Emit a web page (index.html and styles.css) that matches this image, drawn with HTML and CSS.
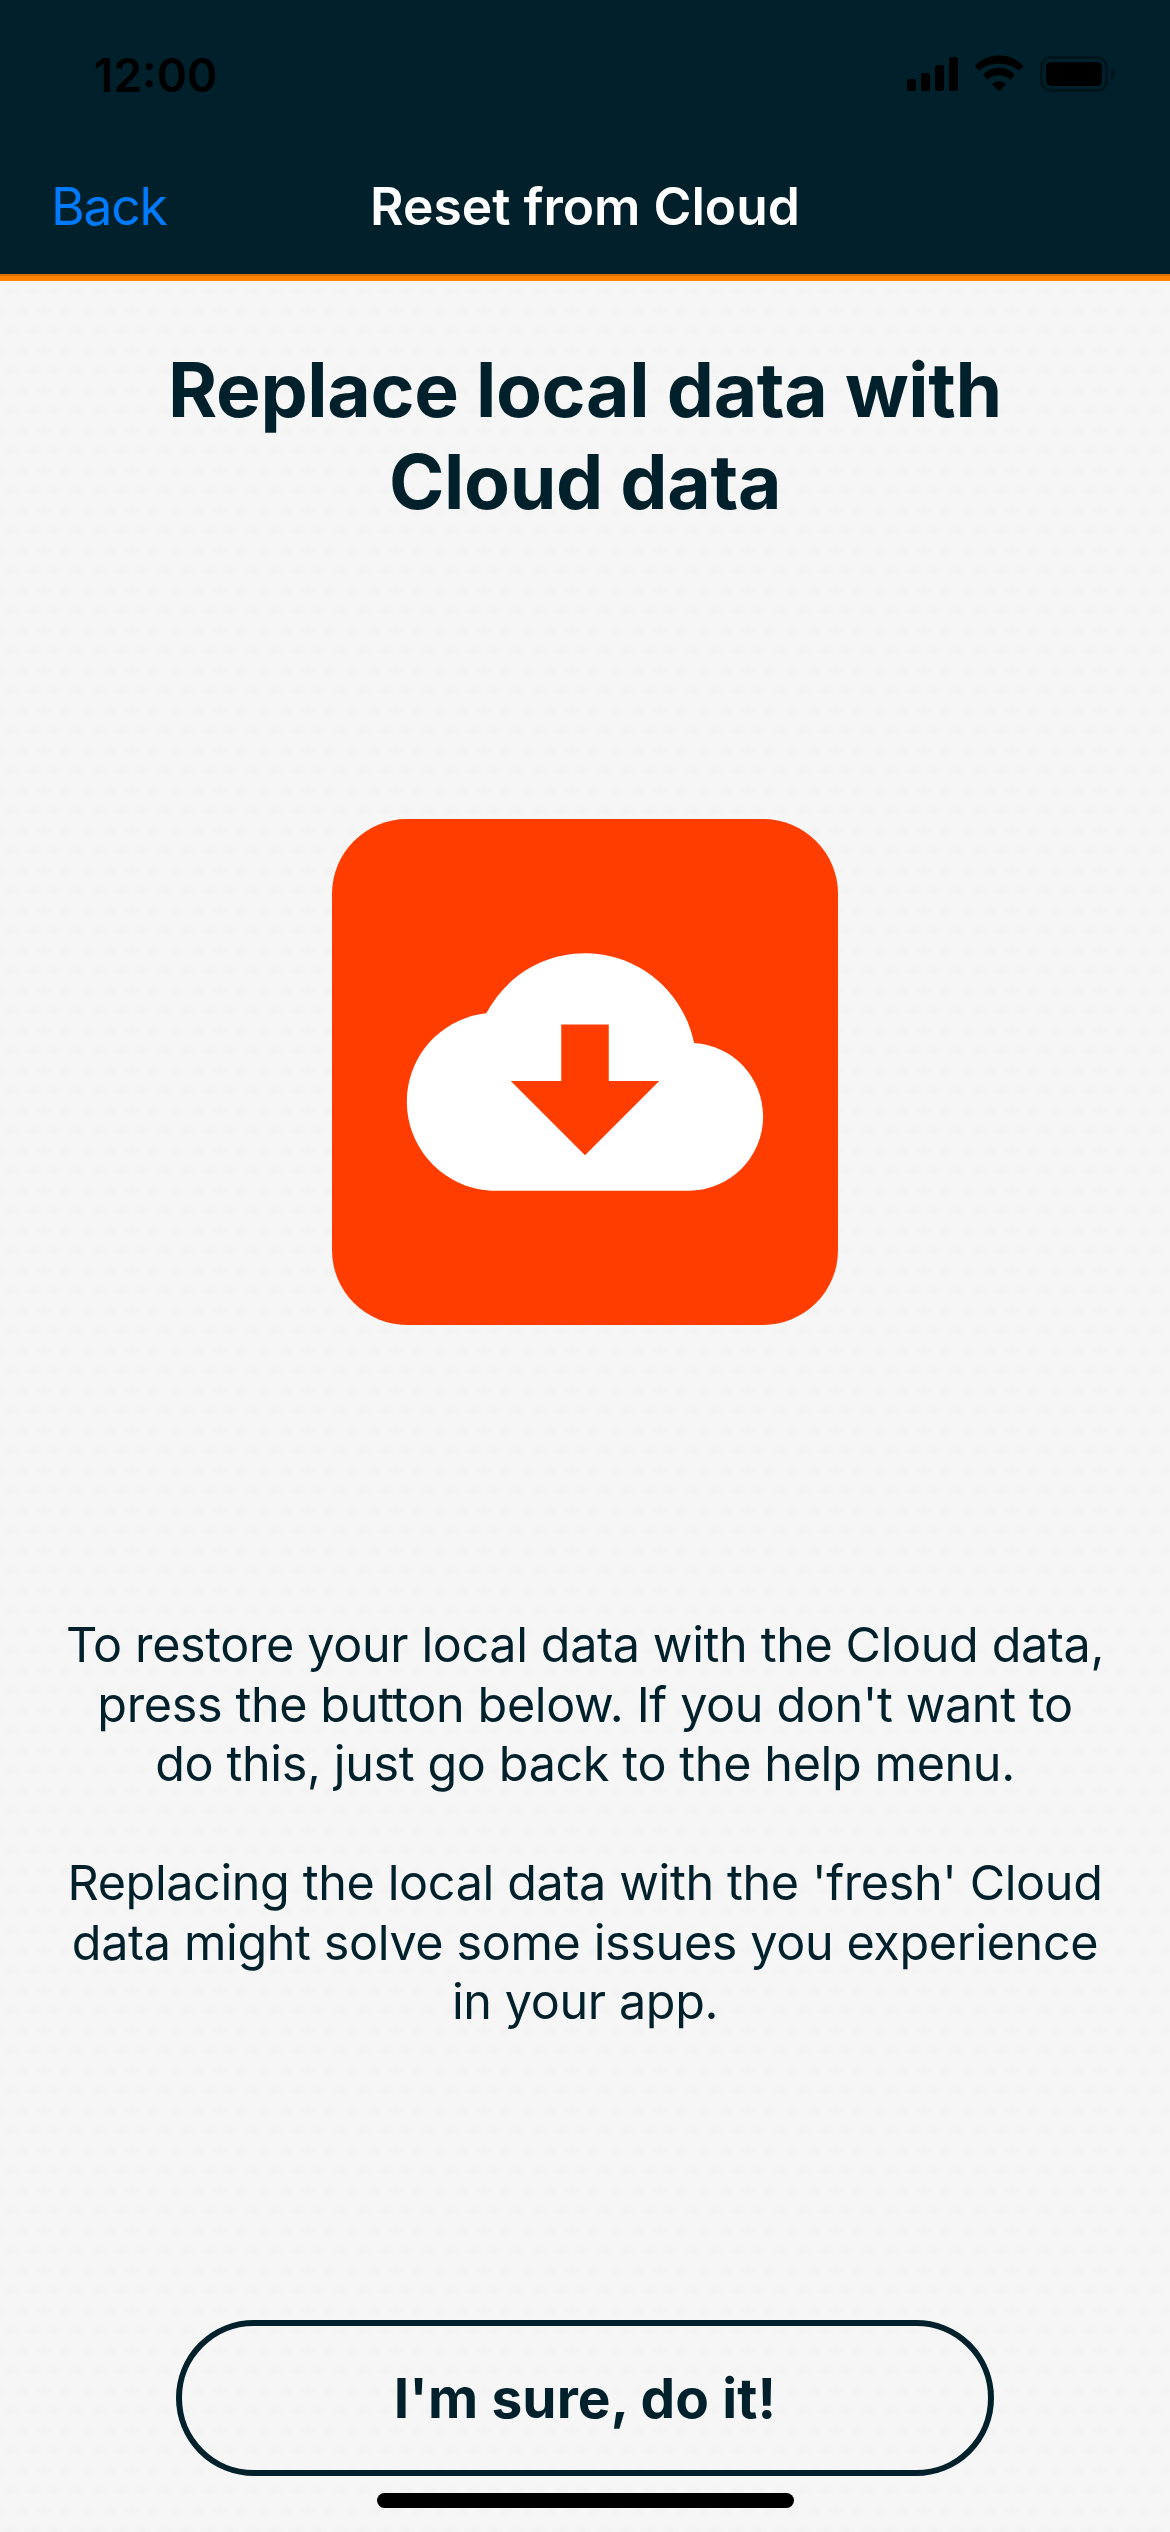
FILE: index.html
```html
<!DOCTYPE html>
<html lang="en">
<head>
<meta charset="utf-8">
<title>Reset from Cloud</title>
<link rel="stylesheet" href="styles.css">
</head>
<body>
<div class="screen">
  <header class="header">
    <div class="status">
      <span class="time">12:00</span>
      <svg class="status-icons" viewBox="0 0 208 38" aria-hidden="true">
        <rect x="0" y="25" width="9" height="12" rx="2.5"/>
        <rect x="14" y="19" width="9" height="18" rx="2.5"/>
        <rect x="28" y="11" width="9" height="26" rx="2.5"/>
        <rect x="42" y="3" width="9" height="34" rx="2.5"/>
        <path d="M67.7 12A33 33 0 0 1 116.3 12L112 16.7A31 31 0 0 0 72 16.7Z"/>
        <path d="M76.2 20.7A21.5 21.5 0 0 1 107.8 20.7L103.5 25.8A17 17 0 0 0 80.5 25.8Z"/>
        <path d="M85 30.2A10 10 0 0 1 99 30.2L92 37.3Z"/>
        <rect class="battery-shell" x="134.5" y="3.5" width="65" height="33" rx="9.5"/>
        <rect x="139" y="8" width="56" height="24" rx="5"/>
        <path class="battery-cap" d="M204 14.2Q208 16 208 20T204 25.8Z"/>
      </svg>
    </div>
    <nav class="nav">
      <a class="back">Back</a>
      <span class="title">Reset from Cloud</span>
    </nav>
  </header>
  <div class="accent"></div>
  <main class="content">
    <h1 class="heading">Replace local data with<br>Cloud data</h1>
    <div class="tile">
      <svg class="cloud" viewBox="0 0 512 512" aria-hidden="true">
        <path d="M403.002 217.001C388.998 148.002 328.998 96 256 96c-57.998 0-107.998 32.998-132.998 81.001C63.002 183.002 16 233.998 16 296c0 65.996 53.999 120 120 120h260c55 0 100-45 100-100 0-52.998-40.996-96.001-92.998-98.999zM224 268v-76h64v76h68L256 368 156 268h68z"/>
      </svg>
    </div>
    <div class="copy">
      <p>To restore your local data with the Cloud data,<br>press the button below. If you don't want to<br>do this, just go back to the help menu.</p>
      <p>Replacing the local data with the 'fresh' Cloud<br>data might solve some issues you experience<br>in your app.</p>
    </div>
    <button class="confirm" type="button">I'm sure, do it!</button>
    <div class="home-bar"></div>
  </main>
</div>
</body>
</html>
```
FILE: styles.css
```css
* {
  box-sizing: border-box;
}

body {
  margin: 0;
  font-family: Inter, "Liberation Sans", sans-serif;
  color: #00212b;
}

.screen {
  width: 1170px;
  height: 2532px;
  display: flex;
  flex-direction: column;
  overflow: hidden;
}

.header {
  height: 274px;
  background: #00212b;
}

.accent {
  height: 7px;
  background: #ff8500;
  border-top: 2px solid #d87207;
}

.status {
  height: 135px;
  padding: 54px 55px 0 94px;
  display: flex;
  justify-content: space-between;
  color: #000;
}

.time {
  font-size: 46px;
  line-height: 42px;
  font-weight: 600;
}

.status-icons {
  width: 208px;
  height: 38px;
}

.battery-shell {
  fill: none;
  stroke: #00151b;
  stroke-width: 3;
}

.battery-cap {
  fill: #00151b;
}

.nav {
  height: 142px;
  padding: 0 51px;
  display: grid;
  grid-template-columns: 1fr auto 1fr;
  align-items: center;
  font-size: 51.5px;
  line-height: 62px;
}

.back {
  color: #007aff;
  letter-spacing: -1.2px;
}

.title {
  color: #fff;
  font-weight: 600;
}

.content {
  flex: 1;
  display: flex;
  flex-direction: column;
  align-items: center;
  background-color: #f6f6f6;
  background-image:
    radial-gradient(ellipse 9px 7px at 11px 10px, #f3f3f3, rgba(243, 243, 243, 0)),
    radial-gradient(ellipse 9px 7px at 0 30px, #f3f3f3, rgba(243, 243, 243, 0)),
    radial-gradient(ellipse 9px 7px at 22px 30px, #f3f3f3, rgba(243, 243, 243, 0));
  background-size: 22px 40px;
}

.heading {
  margin: 63px 0 0;
  font-size: 75px;
  line-height: 92px;
  letter-spacing: -0.35px;
  font-weight: 700;
  text-align: center;
  white-space: nowrap;
}

.tile {
  width: 506px;
  height: 506px;
  margin-top: 291px;
  border-radius: 75px;
  background: #ff3d00;
  display: flex;
  align-items: center;
  justify-content: center;
}

.cloud {
  width: 380px;
  height: 380px;
  fill: #fff;
}

.copy {
  margin-top: 290px;
  display: flex;
  flex-direction: column;
  gap: 59.5px;
  font-size: 48.5px;
  line-height: 59.6px;
  letter-spacing: -0.37px;
  text-align: center;
  white-space: nowrap;
}

.copy p {
  margin: 0;
}

.confirm {
  width: 818px;
  height: 156px;
  margin-top: 288px;
  padding: 0;
  border: 6px solid #00212b;
  border-radius: 78px;
  background: none;
  color: inherit;
  font: 700 55px/66px Inter, "Liberation Sans", sans-serif;
  letter-spacing: 0.1px;
}

.home-bar {
  width: 417px;
  height: 15px;
  margin-top: 17px;
  border-radius: 8px;
  background: #000;
}
```
